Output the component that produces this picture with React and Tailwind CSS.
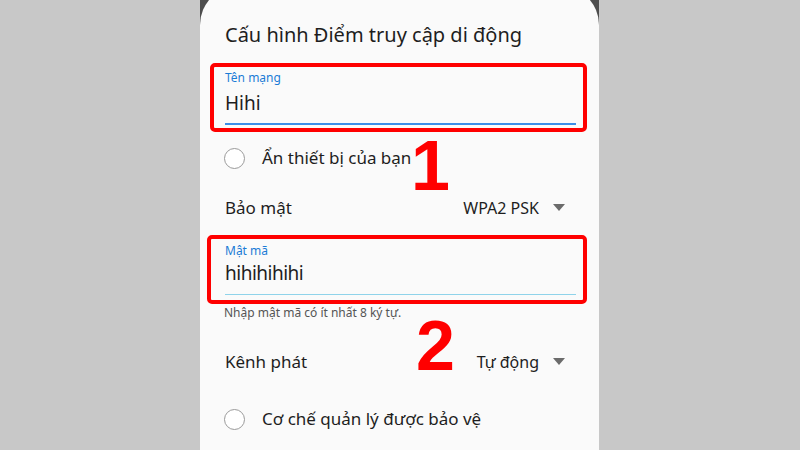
import React from "react";

// Cấu hình điểm truy cập di động (ảnh chụp có chú thích đỏ 1, 2)
const Radio = ({ label }) => (
    <div className="flex items-center h-[40px]">
        <span className="w-[21px] h-[21px] rounded-full border-[1.5px] border-[#9a9a9a] bg-white ml-[-1px]" />
        <span className="ml-[17px] text-[17px] text-[#1e1e1e]">{label}</span>
    </div>
);

const Caret = () => (
    <svg width="12" height="8" viewBox="0 0 12 8" className="ml-[14px]">
        <path d="M0 0h12L6 7z" fill="#6b6b6b" />
    </svg>
);

const Dropdown = ({ label, value }) => (
    <div className="flex items-center justify-between h-[40px] pr-[34px]">
        <span className="text-[17px] text-[#1e1e1e]">{label}</span>
        <div className="flex items-center">
            <span className="text-[16px] text-[#1e1e1e]">{value}</span>
            <Caret />
        </div>
    </div>
);

export default function App() {
    return (
        <div
            className="w-[800px] h-[450px] bg-[#c8c8c8] flex justify-center overflow-hidden"
            style={{ fontFamily: '"Noto Sans", "DejaVu Sans", sans-serif' }}
        >
            <div className="w-[399px] h-full bg-[#4d4d4d] ml-[-1px]">
                <div className="relative h-[470px] mt-[-14px] bg-[#fafafa] rounded-t-[39px] pt-[34px]">
                    <div className="pl-[25px] text-[20px] text-[#1e1e1e] leading-[30px]">
                        Cấu hình Điểm truy cập di động
                    </div>

                    {/* ô 1: tên mạng */}
                    <div className="mt-[13px] ml-[10px] w-[377px] h-[69px] border-[4px] border-[#ff0000] rounded-[5px] pl-[11px] pr-[7px] pt-[3px]">
                        <div className="text-[12px] text-[#1a7cd6] leading-[16px]">Tên mạng</div>
                        <div className="text-[19px] text-[#1e1e1e] leading-[26px] mt-[4px]">Hihi</div>
                        <div className="h-[2px] bg-[#3b8ee8] mt-[7px]" />
                    </div>

                    <div className="pl-[25px] mt-[6px]">
                        <Radio label="Ẩn thiết bị của bạn" />
                    </div>
                    <div className="pl-[25px] mt-[10px]">
                        <Dropdown label="Bảo mật" value="WPA2 PSK" />
                    </div>

                    {/* ô 2: mật mã */}
                    <div className="mt-[7px] ml-[7px] w-[380px] h-[69px] border-[4px] border-[#ff0000] rounded-[5px] pl-[14px] pr-[7px] pt-[4px]">
                        <div className="text-[12px] text-[#1a7cd6] leading-[16px]">Mật mã</div>
                        <div className="text-[19px] text-[#1e1e1e] leading-[26px] mt-[1px] tracking-[-0.5px]">hihihihihi</div>
                        <div className="h-[1px] bg-[#8fd3ea] mt-[8px]" />
                    </div>
                    <div className="pl-[24px] mt-[1px] text-[12px] text-[#555] leading-[16px]">
                        Nhập mật mã có ít nhất 8 ký tự.
                    </div>

                    <div className="pl-[25px] mt-[21px]">
                        <Dropdown label="Kênh phát" value="Tự động" />
                    </div>
                    <div className="pl-[25px] mt-[17px]">
                        <Radio label="Cơ chế quản lý được bảo vệ" />
                    </div>

                    {/* chú thích số đỏ */}
                    <div
                        className="absolute left-[211px] top-[145px] text-[#ff0000] text-[70px] font-bold leading-none"
                        style={{ fontFamily: '"Liberation Sans", Arial, sans-serif' }}
                    >
                        1
                    </div>
                    <div
                        className="absolute left-[216px] top-[325px] text-[#ff0000] text-[70px] font-bold leading-none"
                        style={{ fontFamily: '"Liberation Sans", Arial, sans-serif' }}
                    >
                        2
                    </div>
                </div>
            </div>
        </div>
    );
}
